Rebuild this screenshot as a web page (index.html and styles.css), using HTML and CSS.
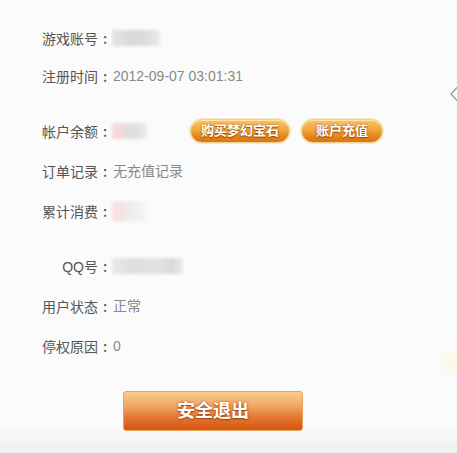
FILE: index.html
```html
<!DOCTYPE html>
<html lang="zh-CN">
<head>
  <meta charset="UTF-8">
  <title>账户信息</title>
  <link rel="stylesheet" href="styles.css">
</head>
<body>

<div class="account">
  <div class="row">
    <span class="label">游戏账号<span class="colon">:</span></span>
    <span class="mask mask-account"></span>
  </div>
  <div class="row">
    <span class="label">注册时间<span class="colon">:</span></span>
    <span class="value">2012-09-07 03:01:31</span>
  </div>
  <div class="row row-wide">
    <span class="label">帐户余额<span class="colon">:</span></span>
    <span class="balance"><span class="mask mask-balance"></span></span>
    <a class="pill" href="#">购买梦幻宝石</a>
    <a class="pill pill-small" href="#">账户充值</a>
  </div>
  <div class="row">
    <span class="label">订单记录<span class="colon">:</span></span>
    <span class="value">无充值记录</span>
  </div>
  <div class="row">
    <span class="label">累计消费<span class="colon">:</span></span>
    <span class="mask mask-spent"></span>
  </div>
  <div class="row row-wide">
    <span class="label">QQ号<span class="colon">:</span></span>
    <span class="mask mask-qq"></span>
  </div>
  <div class="row">
    <span class="label">用户状态<span class="colon">:</span></span>
    <span class="value">正常</span>
  </div>
  <div class="row">
    <span class="label">停权原因<span class="colon">:</span></span>
    <span class="value">0</span>
  </div>

  <div class="actions">
    <a class="logout" href="#">安全退出</a>
  </div>
</div>

<svg class="side-arrow" width="10" height="16" viewBox="0 0 10 16">
  <path d="M8 1.5 L2 8 L8 14.5" fill="none" stroke="#8a9aa8" stroke-width="1.2"/>
</svg>

</body>
</html>
```

FILE: styles.css
```css
html, body {
  margin: 0;
  padding: 0;
}
body {
  position: relative;
  height: 454px;
  box-sizing: border-box;
  overflow: hidden;
  border-bottom: 1px solid #c6d2e0;
  font-family: "Liberation Sans", "Noto Sans CJK SC", sans-serif;
  font-size: 14px;
  color: #555;
  background:
    radial-gradient(ellipse 30px 18px at 460px 362px, rgba(250, 247, 215, 0.8), rgba(251, 251, 251, 0) 100%),
    linear-gradient(to bottom, #fbfbfb 0, #fbfbfb 425px, #efefef 453px);
}
.account {
  padding: 28px 0 0 42px;
}
.row {
  display: flex;
  align-items: center;
  height: 20px;
  line-height: 20px;
  margin-bottom: 20px;
}
.row:first-child {
  margin-bottom: 18px;
}
.row-wide {
  margin-top: 35px;
}
.label {
  width: 70px;
  text-align: right;
  color: #555;
}
.colon {
  display: inline-block;
  width: 14px;
  text-align: center;
  font-family: "Noto Sans CJK SC", sans-serif;
  font-weight: 500;
  color: #555;
}
.value {
  color: #888;
  padding-left: 1px;
}
.mask {
  display: block;
  height: 16px;
  filter: blur(1.5px);
}
.mask-account {
  width: 48px;
  background: linear-gradient(to right, #e4e4e4, #d9d9d9 40%, #dcdcdc 70%, #eaeaea);
}
.balance {
  width: 78px;
}
.mask-balance {
  width: 35px;
  background: linear-gradient(to right, #fad6da 0, #f4d8da 30%, #dedede 40%, #e0e0e0 70%, #ececec);
}
.mask-spent {
  width: 34px;
  height: 20px;
  background: linear-gradient(to right, #fbdfe1 0, #f6e2e3 35%, #ececec 45%, #f0f0f0 75%, #f5f5f5);
}
.mask-qq {
  width: 71px;
  background: linear-gradient(to right, #e8e8e8, #dedede 30%, #e3e3e3 60%, #dadada 85%, #ebebeb);
}
.pill {
  display: inline-block;
  box-sizing: border-box;
  width: 100px;
  height: 24px;
  line-height: 21px;
  text-align: center;
  font-size: 13px;
  font-weight: bold;
  color: #fff;
  text-decoration: none;
  text-shadow: 0 0 2px #a04a00, 0 1px 1px #9a4800;
  border: 1px solid #f1cf8e;
  border-radius: 12px;
  background: linear-gradient(to bottom, #f7c46a 0, #f0a63c 45%, #e3861c 75%, #d8741a 100%);
  box-shadow: inset 0 1px 0 rgba(255, 240, 200, 0.7), 0 0 0 1px #fbe6bd;
}
.pill-small {
  width: 82px;
  margin-left: 11px;
}
.actions {
  padding: 15px 0 0 81px;
}
.logout {
  display: block;
  box-sizing: border-box;
  width: 180px;
  height: 40px;
  line-height: 38px;
  text-align: center;
  font-size: 18px;
  font-weight: bold;
  color: #fff;
  text-decoration: none;
  text-shadow: 0 0 3px #b04c10, 0 1px 1px #a04000;
  border: 1px solid #e6a35a;
  border-radius: 3px;
  background: linear-gradient(to bottom, #fbcc8e 0, #f1a868 35%, #e47a35 65%, #d6540e 100%);
}
.side-arrow {
  position: absolute;
  left: 449px;
  top: 86px;
}
```
